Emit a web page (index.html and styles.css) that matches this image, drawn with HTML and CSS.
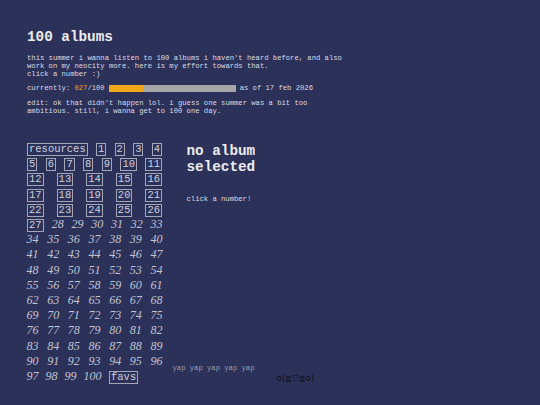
FILE: index.html
```html
<!DOCTYPE html>
<html>
<head>
<meta charset="utf-8">
<link rel="stylesheet" href="styles.css">
</head>
<body>
<div class="page">
  <h1 class="title">100 albums</h1>
  <p class="intro">this summer i wanna listen to 100 albums i haven't heard before, and also<br>work on my neocity more. here is my effort towards that.<br>click a number :)</p>
  <div class="progress">
    <span>currently: <span class="count">027</span>/100</span>
    <span class="bar"><span class="fill" style="width:27%"></span></span>
    <span>as of 17 feb 2026</span>
  </div>
  <p class="edit">edit: ok that didn't happen lol. i guess one summer was a bit too<br>ambitious. still, i wanna get to 100 one day.</p>

  <div class="main">
    <div class="grid">
      <span class="box">resources</span> <span class="box">1</span> <span class="box">2</span> <span class="box">3</span> <span class="box">4</span> <span class="box">5</span> <span class="box">6</span> <span class="box">7</span> <span class="box">8</span> <span class="box">9</span> <span class="box">10</span> <span class="box">11</span> <span class="box">12</span> <span class="box">13</span> <span class="box">14</span> <span class="box">15</span> <span class="box">16</span> <span class="box">17</span> <span class="box">18</span> <span class="box">19</span> <span class="box">20</span> <span class="box">21</span> <span class="box">22</span> <span class="box">23</span> <span class="box">24</span> <span class="box">25</span> <span class="box">26</span> <span class="box">27</span> <span class="num">28</span> <span class="num">29</span> <span class="num">30</span> <span class="num">31</span> <span class="num">32</span> <span class="num">33</span> <span class="num">34</span> <span class="num">35</span> <span class="num">36</span> <span class="num">37</span> <span class="num">38</span> <span class="num">39</span> <span class="num">40</span> <span class="num">41</span> <span class="num">42</span> <span class="num">43</span> <span class="num">44</span> <span class="num">45</span> <span class="num">46</span> <span class="num">47</span> <span class="num">48</span> <span class="num">49</span> <span class="num">50</span> <span class="num">51</span> <span class="num">52</span> <span class="num">53</span> <span class="num">54</span> <span class="num">55</span> <span class="num">56</span> <span class="num">57</span> <span class="num">58</span> <span class="num">59</span> <span class="num">60</span> <span class="num">61</span> <span class="num">62</span> <span class="num">63</span> <span class="num">64</span> <span class="num">65</span> <span class="num">66</span> <span class="num">67</span> <span class="num">68</span> <span class="num">69</span> <span class="num">70</span> <span class="num">71</span> <span class="num">72</span> <span class="num">73</span> <span class="num">74</span> <span class="num">75</span> <span class="num">76</span> <span class="num">77</span> <span class="num">78</span> <span class="num">79</span> <span class="num">80</span> <span class="num">81</span> <span class="num">82</span> <span class="num">83</span> <span class="num">84</span> <span class="num">85</span> <span class="num">86</span> <span class="num">87</span> <span class="num">88</span> <span class="num">89</span> <span class="num">90</span> <span class="num">91</span> <span class="num">92</span> <span class="num">93</span> <span class="num">94</span> <span class="num">95</span> <span class="num">96</span> <span class="num">97</span> <span class="num">98</span> <span class="num">99</span> <span class="num">100</span> <span class="box">favs</span>
    </div>
    <div class="side">
      <div class="panel">
        <h2 class="album">no album<br>selected</h2>
        <p class="hint">click a number!</p>
      </div>
      <div class="foot">
        <span class="yap">yap yap yap yap yap</span>
        <span class="kao">o(≧▽≦o)</span>
      </div>
    </div>
  </div>
</div>
</body>
</html>
```

FILE: styles.css
```css
html, body {
  margin: 0;
  padding: 0;
  background: #2b3159;
}
.page {
  width: 540px;
  height: 405px;
  box-sizing: border-box;
  padding: 28px 0 0 27px;
  font-family: "Liberation Mono", monospace;
  color: #dcdce4;
  overflow: hidden;
}
.title {
  margin: 0;
  font-size: 14.3px;
  font-weight: bold;
  line-height: 18px;
  color: #ececf0;
}
.intro, .edit {
  margin: 0;
  font-size: 7.2px;
  line-height: 8px;
}
.intro {
  margin-top: 8px;
}
.progress {
  display: flex;
  align-items: center;
  gap: 4px;
  margin-top: 6px;
  font-size: 7.2px;
  line-height: 8px;
}
.count {
  color: #f0a818;
}
.bar {
  display: block;
  width: 127px;
  height: 7px;
  background: #a6a6a8;
}
.fill {
  display: block;
  height: 100%;
  background: #f0a818;
}
.edit {
  margin-top: 7px;
}
.main {
  display: flex;
  margin-top: 26px;
}
.grid {
  width: 140px;
  margin-left: -2.5px;
  text-align: justify;
  line-height: 15.2px;
  font-size: 12px;
  font-family: "Liberation Serif", serif;
}
.box {
  display: inline-block;
  margin: 0 2.5px;
  font-family: "Liberation Mono", monospace;
  font-size: 10.5px;
  line-height: 11px;
  padding: 0 1px;
  border: 1px solid #a4a6b8;
  color: #cfd0dc;
}
.num {
  display: inline-block;
  margin: 0 2px;
  font-family: "Liberation Serif", serif;
  font-style: italic;
  font-size: 12px;
  color: #c2c4d2;
}
.side {
  display: flex;
  flex-direction: column;
  margin-left: 8px;
}
.panel {
  padding-left: 14px;
}
.album {
  margin: 2px 0 0;
  font-size: 14.3px;
  font-weight: bold;
  line-height: 16px;
  color: #ececf0;
}
.hint {
  margin: 20px 0 0;
  font-size: 7.2px;
  line-height: 8px;
}
.foot {
  margin-top: auto;
  display: flex;
  align-items: flex-start;
  margin-bottom: 1px;
}
.yap {
  font-size: 7.2px;
  line-height: 9px;
  color: #9a9cb0;
}
.kao {
  margin-left: 22px;
  margin-top: 10px;
  font-family: "DejaVu Sans", sans-serif;
  font-size: 8.5px;
  line-height: 9px;
  color: #101018;
}
```
